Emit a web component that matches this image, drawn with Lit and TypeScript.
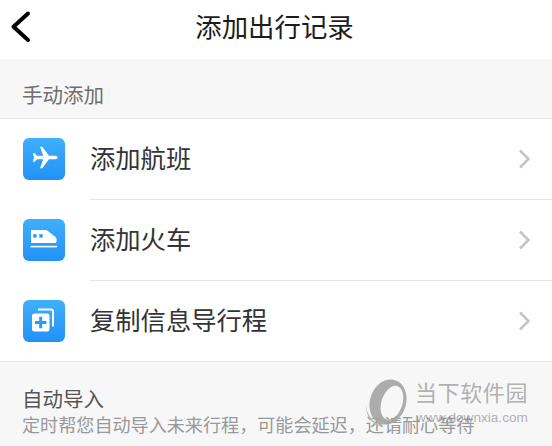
import { LitElement, css, html, svg } from 'lit';
import { customElement } from 'lit/decorators.js';

const plane = svg`<path d="M17 8.700h2.300L26 17.800h6c1.500 0 2.600.8 2.600 1.700s-1.100 1.700-2.600 1.700h-6l-6.700 9.100H17l3.300-9.100H14l-2.200 2.600h-2L11 19.500 9.800 15.200h2l2.200 2.600h6.300z" fill="#fff"/>`;

const train = svg`
  <path d="M8 11h15.500L32.500 18c1.600 1.400 1.800 6-.5 6H8z" fill="#fff"/>
  <rect x="10.200" y="15.200" width="3.400" height="3.400" fill="#2a9bf8"/>
  <rect x="16.300" y="15.200" width="3.400" height="3.400" fill="#2a9bf8"/>
  <rect x="7.500" y="26.800" width="26.500" height="1.600" fill="#fff"/>`;

const copy = svg`
  <path d="M15 9.500h13c1.200 0 2 .8 2 2v15" fill="none" stroke="#fff" stroke-width="2"/>
  <rect x="9" y="13.500" width="17.500" height="18" rx="2.500" fill="#fff"/>
  <path d="M17.700 16.800v11.400M12 22.500h11.400" stroke="#2a9bf8" stroke-width="3"/>`;

const items = [
  { label: '添加航班', icon: plane },
  { label: '添加火车', icon: train },
  { label: '复制信息导行程', icon: copy },
];

@customElement('app-root')
export class AppRoot extends LitElement {
  static styles = css`
    :host {
      display: block;
      width: 552px;
      height: 446px;
      overflow: hidden;
      position: relative;
      background: #f7f7f7;
      font-family: 'Liberation Sans', 'Noto Sans CJK SC', sans-serif;
    }
    .nav {
      height: 59px;
      box-sizing: border-box;
      padding: 0 3px 8px 0;
      background: #fff;
      display: flex;
      align-items: center;
      justify-content: center;
      position: relative;
      font-size: 26.4px;
      color: #1c1c1c;
    }
    .back {
      position: absolute;
      left: 10px;
      top: 10px;
      width: 22px;
      height: 34px;
    }
    .section {
      height: 59px;
      box-sizing: border-box;
      padding: 23px 0 0 22px;
      font-size: 20.5px;
      line-height: 28px;
      color: #6e6e6e;
    }
    .list {
      background: #fff;
      border-top: 1px solid #e4e4e4;
      border-bottom: 1px solid #e4e4e4;
    }
    .row {
      height: 80px;
      display: flex;
      align-items: center;
      padding-left: 23px;
    }
    .row + .row {
      margin-top: 1px;
    }
    .icon {
      width: 42px;
      height: 42px;
      flex: none;
      border-radius: 6px;
      background: linear-gradient(#3fb0fc, #2191f7);
    }
    .icon svg {
      display: block;
    }
    .body {
      flex: 1;
      height: 100%;
      margin-left: 25px;
      display: flex;
      align-items: center;
      justify-content: space-between;
      padding-right: 22px;
      font-size: 25.3px;
      color: #333;
      box-shadow: 0 1px 0 #e4e4e4;
    }
    .body span {
      padding-bottom: 4px;
    }
    .row:last-child .body {
      box-shadow: none;
    }
    .auto {
      padding: 25px 0 0 22px;
    }
    .auto-title {
      font-size: 20.5px;
      line-height: 26px;
      color: #555;
    }
    .auto-desc {
      font-size: 18.100px;
      line-height: 26px;
      color: #999;
      white-space: nowrap;
    }
    .mark {
      position: absolute;
      left: 364px;
      top: 378px;
      width: 188px;
      height: 60px;
      color: rgba(130, 130, 130, 0.62);
    }
    .mark svg {
      position: absolute;
      left: 0;
      top: 0;
    }
    .mark-cn {
      position: absolute;
      left: 51px;
      top: 2px;
      font-size: 22px;
      line-height: 28px;
      letter-spacing: 0.600px;
      white-space: nowrap;
    }
    .mark-url {
      position: absolute;
      left: 52px;
      top: 32px;
      font-size: 13.600px;
      line-height: 16px;
      white-space: nowrap;
    }
  `;

  render() {
    return html`
      <div class="nav">
        <svg class="back" viewBox="0 0 22 34">
          <path d="M18 3.500 3.500 16.800 18 30" fill="none" stroke="#000" stroke-width="4" stroke-linecap="round" stroke-linejoin="round"/>
        </svg>
        添加出行记录
      </div>
      <div class="section">手动添加</div>
      <div class="list">
        ${items.map(
          (item) => html`
            <div class="row">
              <div class="icon">
                <svg width="42" height="42" viewBox="0 0 42 42">${item.icon}</svg>
              </div>
              <div class="body">
                <span>${item.label}</span>
                <svg width="12" height="20" viewBox="0 0 12 20">
                  <path d="M2 1.500l8.500 8.500-8.500 8.500" fill="none" stroke="#c4c4c4" stroke-width="2.600"/>
                </svg>
              </div>
            </div>
          `,
        )}
      </div>
      <div class="auto">
        <div class="auto-title">自动导入</div>
        <div class="auto-desc">定时帮您自动导入未来行程，可能会延迟，还请耐心等待</div>
      </div>
      <div class="mark">
        <svg width="50" height="56" viewBox="0 0 50 56">
          <g transform="rotate(18 24 24)" fill="#a3a3a3" fill-opacity="0.9" fill-rule="evenodd">
            <path d="M24 1a18 23 0 1 0 .01 0zM28 6a10.500 17.500 0 1 1-.01 0z"/>
          </g>
          <path d="M2 26c0 10 7 19 18 23-9 0-19-9-18-23z" fill="#bbb"/>
        </svg>
        <div class="mark-cn">当下软件园</div>
        <div class="mark-url">www.downxia.com</div>
      </div>
    `;
  }
}
